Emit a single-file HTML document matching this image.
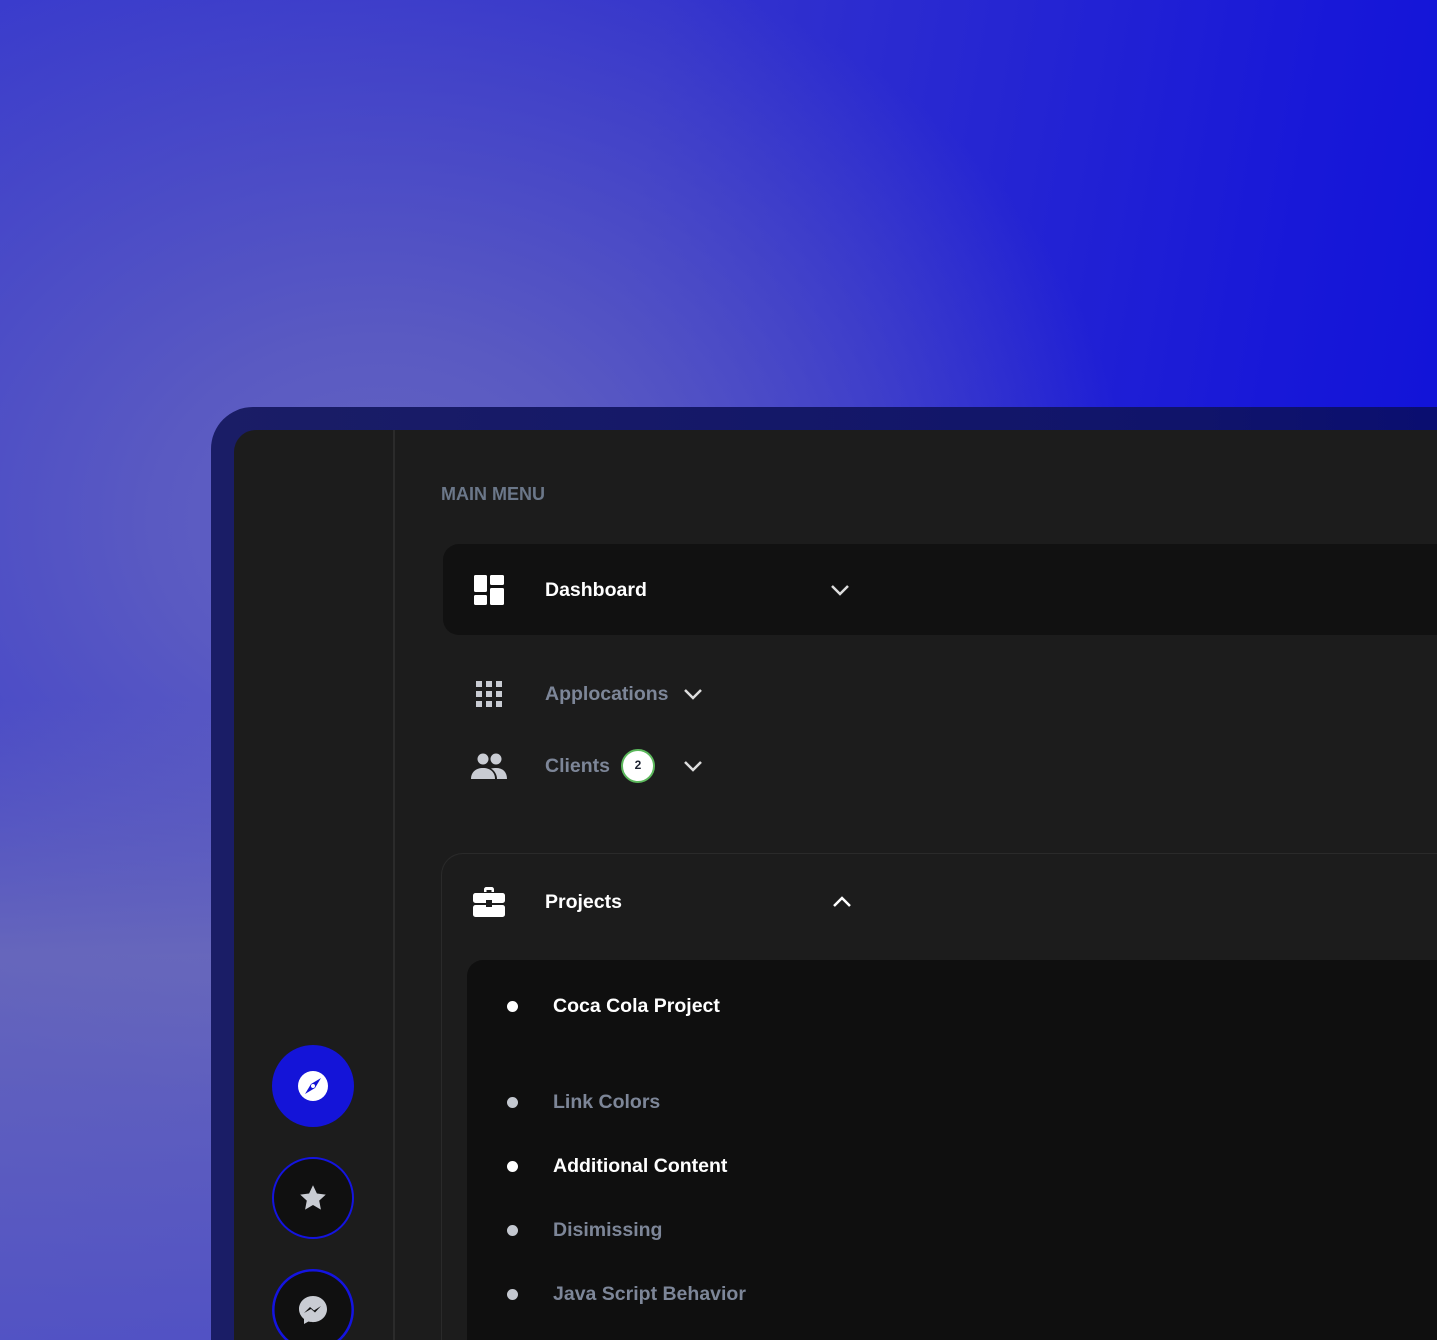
<!DOCTYPE html>
<html><head><meta charset="utf-8"><style>
*{margin:0;padding:0;box-sizing:border-box}
html,body{width:1437px;height:1340px;overflow:hidden}
body{font-family:"Liberation Sans",sans-serif;font-weight:bold}
#w{position:relative;width:1437px;height:1340px;overflow:hidden;
background:radial-gradient(ellipse 750px 600px at 380px 520px,#6464c0 0%,#5a5ac2 30%,rgba(60,60,200,0) 100%),linear-gradient(100deg,#3a3ccc 0%,#3434cc 40%,#1818d8 80%,#0c10d8 100%);}
.bl{position:absolute;left:0;top:700px;width:211px;height:640px;background:linear-gradient(180deg,rgba(110,110,185,0) 0%,rgba(112,112,184,.8) 40%,rgba(100,100,190,.6) 100%)}
.bezel{position:absolute;left:211px;top:407px;width:1226px;height:933px;border-radius:42px 0 0 0;background:linear-gradient(90deg,#1a1d66,#10146a 80%,#0a0e70)}
.panel{position:absolute;left:234px;top:430px;width:1203px;height:910px;background:#1c1c1c;border-radius:22px 0 0 0}
.div{position:absolute;left:393px;top:430px;width:2px;height:910px;background:#2b2b2b}
.t{position:absolute;white-space:nowrap}
.mm{left:441px;top:484px;font-size:18px;color:#6b7789}
.card1{position:absolute;left:443px;top:544px;width:994px;height:91px;background:#111;border-radius:16px 0 0 16px}
.card2{position:absolute;left:441px;top:853px;width:996px;height:487px;background:#1c1c1c;border:1.5px solid #2a2a2a;border-right:0;border-bottom:0;border-radius:22px 0 0 0}
.card3{position:absolute;left:467px;top:960px;width:970px;height:380px;background:#0f0f0f;border-radius:16px 0 0 0}
.w{color:#fff;font-size:19.5px}
.g{color:#7d8698;font-size:19.5px}
.dot{position:absolute;left:507px;width:11px;height:11px;border-radius:50%}
.btn{position:absolute;left:272px;width:82px;height:82px;border-radius:50%}
</style></head><body><div id="w">
<div class="bl"></div>
<div class="bezel"></div>
<div class="panel"></div>
<div class="div"></div>
<div class="t mm">MAIN MENU</div>
<div class="card1"></div>
<svg style="position:absolute;left:474px;top:575px" width="30" height="30" viewBox="0 0 30 30" fill="#fff"><rect x="0" y="0" width="13" height="17" rx="1.5"/><rect x="16" y="0" width="14" height="10" rx="1.5"/><rect x="0" y="20" width="13" height="10" rx="1.5"/><rect x="16" y="13" width="14" height="17" rx="1.5"/></svg>
<div class="t w" style="left:545px;top:579px">Dashboard</div>
<svg style="position:absolute;left:830px;top:583px" width="20" height="14" viewBox="0 0 20 14"><path d="M2 3l8 8 8-8" stroke="#ddd" stroke-width="2.5" fill="none"/></svg>
<svg style="position:absolute;left:476px;top:681px" width="26" height="26" viewBox="0 0 26 26" fill="#c9ccd3"><rect x="0" y="0" width="6" height="6"/><rect x="10" y="0" width="6" height="6"/><rect x="20" y="0" width="6" height="6"/><rect x="0" y="10" width="6" height="6"/><rect x="10" y="10" width="6" height="6"/><rect x="20" y="10" width="6" height="6"/><rect x="0" y="20" width="6" height="6"/><rect x="10" y="20" width="6" height="6"/><rect x="20" y="20" width="6" height="6"/></svg>
<div class="t g" style="left:545px;top:683px">Applocations</div>
<svg style="position:absolute;left:683px;top:687px" width="20" height="14" viewBox="0 0 20 14"><path d="M2 3l8 8 8-8" stroke="#ddd" stroke-width="2.5" fill="none"/></svg>
<svg style="position:absolute;left:471px;top:752px" width="36" height="28" viewBox="0 0 36 28" fill="#c9ccd3"><circle cx="12" cy="7" r="5.5"/><circle cx="25" cy="7" r="5.5"/><path d="M0 27c0-7 5-11 12-11s12 4 12 11z"/><path d="M20 16.5c2-.5 3.5-.5 5-.5 7 0 11 4 11 11H26c0-4-2-8-6-10.5z"/></svg>
<div class="t g" style="left:545px;top:755px">Clients</div>
<div style="position:absolute;left:621px;top:749px;width:34px;height:34px;border-radius:50%;background:#fff;border:2.5px solid #5cb85c;font-size:12px;color:#1c2230;text-align:center;line-height:29px">2</div>
<svg style="position:absolute;left:683px;top:759px" width="20" height="14" viewBox="0 0 20 14"><path d="M2 3l8 8 8-8" stroke="#ddd" stroke-width="2.5" fill="none"/></svg>
<div class="card2"></div>
<svg style="position:absolute;left:472px;top:886px" width="34" height="32" viewBox="0 0 34 32" fill="#fff"><path d="M12 6V3.5C12 2 13 1 14.5 1h5C21 1 22 2 22 3.5V6h-2.5V4h-5v2z"/><rect x="1" y="7" width="32" height="10" rx="2.5"/><rect x="1" y="19" width="32" height="12" rx="2.5"/><rect x="14" y="14" width="6" height="7" fill="#1c1c1c"/></svg>
<div class="t w" style="left:545px;top:891px">Projects</div>
<svg style="position:absolute;left:832px;top:895px" width="20" height="14" viewBox="0 0 20 14"><path d="M2 11l8-8 8 8" stroke="#fff" stroke-width="2.5" fill="none"/></svg>
<div class="card3"></div>
<div class="dot" style="top:1001px;background:#fff"></div><div class="t w" style="left:553px;top:995px">Coca Cola Project</div>
<div class="dot" style="top:1097px;background:#c4c8d0"></div><div class="t g" style="left:553px;top:1091px">Link Colors</div>
<div class="dot" style="top:1161px;background:#fff"></div><div class="t w" style="left:553px;top:1155px">Additional Content</div>
<div class="dot" style="top:1225px;background:#c4c8d0"></div><div class="t g" style="left:553px;top:1219px">Disimissing</div>
<div class="dot" style="top:1289px;background:#c4c8d0"></div><div class="t g" style="left:553px;top:1283px">Java Script Behavior</div>
<div class="btn" style="top:1045px;background:#1414d8"></div>
<svg style="position:absolute;left:297px;top:1070px" width="32" height="32" viewBox="0 0 32 32"><circle cx="16" cy="16" r="15" fill="#fff"/><path d="M24 8L18 18 8 24 14 14z" fill="#1414d8"/><circle cx="16" cy="16" r="2" fill="#fff"/></svg>
<div class="btn" style="top:1157px;background:#101010;border:2.5px solid #1414e0"></div>
<svg style="position:absolute;left:298px;top:1184px" width="30" height="28" viewBox="0 0 24 23"><path d="M12 1l3.2 6.8 7.3.9-5.4 5 1.4 7.3L12 17.3 5.5 21l1.4-7.3-5.4-5 7.3-.9z" fill="#c9ccd3"/></svg>
<svg style="position:absolute;left:272px;top:1269px" width="82" height="71" viewBox="0 0 82 71"><circle cx="41" cy="41" r="39.7" fill="#101010" stroke="#1414e0" stroke-width="2.5"/><g transform="translate(25,25)"><path d="M16 2C8 2 2 8 2 15c0 4 2 7.5 5 10v5l4.5-2.5c1.4.4 3 .6 4.5.6 8 0 14-6 14-13S24 2 16 2z" fill="#c9ccd3"/><path d="M7 19l6-6 4 3.5 7-4.5-6 6.5-4-3.5z" fill="#101010"/></g></svg>
</div></body></html>
